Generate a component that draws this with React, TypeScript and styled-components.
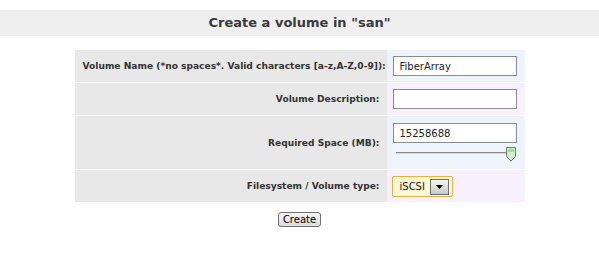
import * as React from 'react'
import styled, { createGlobalStyle } from 'styled-components';

const GlobalStyle = createGlobalStyle`
	body {
		margin: 0;
		background: #ffffff;
		font-family: "DejaVu Sans", Verdana, sans-serif;
		color: #333333;
	}
`

const Page = styled.div`
	padding-top: 10px;
	display: flex;
	flex-direction: column;
	align-items: center;
`

const TitleBar = styled.h2`
	align-self: stretch;
	margin: 0;
	height: 26px;
	line-height: 26px;
	background: #efefef;
	text-align: center;
	font-size: 13px;
	font-weight: bold;
	color: #3a3a3a;
`

const FormTable = styled.table`
	margin-top: 13px;
	border-collapse: separate;
	border-spacing: 0 1px;
	table-layout: fixed;
	width: 450px;
`

const LabelCell = styled.td`
	width: 297px;
	background: #e8e8e8;
	text-align: right;
	padding: 0 7px 0 8px;
	font-size: 9.1px;
	font-weight: bold;
	color: #333333;
	white-space: nowrap;
`

const ValueCell = styled.td<{ $tint: 'blue' | 'pink' }>`
	background: ${p => (p.$tint === 'blue' ? '#edf4fc' : '#f8f0fc')};
	padding: 0 5px 0 6px;
`

const Row = styled.tr<{ $tall?: boolean }>`
	height: ${p => (p.$tall ? '53px' : '32px')};
`

const TextInput = styled.input`
	box-sizing: border-box;
	display: block;
	width: 124px;
	height: 20px;
	border: 1px solid #8c8c8c;
	background: #ffffff;
	padding: 0 6px;
	font-family: "DejaVu Sans", Verdana, sans-serif;
	font-size: 10px;
	color: #222222;
	outline: none;
`

const SliderBox = styled.div`
	margin-top: 3px;
	width: 124px;
	height: 16px;
`

const SelectBox = styled.div`
	display: inline-flex;
	align-items: center;
	gap: 5px;
	box-sizing: border-box;
	height: 21px;
	margin-left: -1px;
	padding: 0 3px 0 7px;
	background: #fff6d2;
	border: 1px solid #e0b24a;
	border-radius: 2px;
	font-size: 10px;
	color: #222222;
`

const ArrowButton = styled.span`
	display: flex;
	align-items: center;
	justify-content: center;
	width: 17px;
	height: 14px;
	background: linear-gradient(#f4f4f4, #c9c9c9);
	border: 1px solid #6f6f6f;
`

const Submit = styled.button`
	margin-top: 9px;
	padding: 0 4px;
	height: 15px;
	font-family: "DejaVu Sans", Verdana, sans-serif;
	font-size: 10px;
	line-height: 12px;
	color: #000000;
	background: linear-gradient(#f6f6f6, #dcdcdc);
	border: 1px solid #707070;
	border-radius: 3px;
`

const rows = [
	{ label: 'Volume Name (*no spaces*. Valid characters [a-z,A-Z,0-9]):', value: 'FiberArray' },
	{ label: 'Volume Description:', value: '' },
]

const Slider = () => (
	<SliderBox>
		<svg width="124" height="16" viewBox="0 0 124 16">
			<line x1="3" y1="6.5" x2="118" y2="6.5" stroke="#8a8a8a" strokeWidth="1" />
			<line x1="3" y1="7.5" x2="118" y2="7.5" stroke="#d8d8d8" strokeWidth="1" />
			<path d="M113.5 1.5 h9 v9 l-4.5 4.5 l-4.5 -4.5 z" fill="#d8ecd2" stroke="#5f8a52" />
			<path d="M115 3 h6 v3 h-6 z" fill="#a8d896" />
		</svg>
	</SliderBox>
)

const App = () => {
	return (
		<Page>
			<GlobalStyle />
			<TitleBar>Create a volume in "san"</TitleBar>
			<FormTable>
				<tbody>
					{rows.map((r, i) => (
						<Row key={r.label}>
							<LabelCell>{r.label}</LabelCell>
							<ValueCell $tint={i % 2 === 0 ? 'blue' : 'pink'}>
								<TextInput defaultValue={r.value} />
							</ValueCell>
						</Row>
					))}
					<Row $tall>
						<LabelCell>Required Space (MB):</LabelCell>
						<ValueCell $tint="blue">
							<TextInput defaultValue="15258688" />
							<Slider />
						</ValueCell>
					</Row>
					<Row>
						<LabelCell>Filesystem / Volume type:</LabelCell>
						<ValueCell $tint="pink">
							<SelectBox>
								iSCSI
								<ArrowButton>
									<svg width="7" height="4" viewBox="0 0 7 4">
										<path d="M0 0 h7 l-3.5 4 z" fill="#000000" />
									</svg>
								</ArrowButton>
							</SelectBox>
						</ValueCell>
					</Row>
				</tbody>
			</FormTable>
			<Submit>Create</Submit>
		</Page>
	)
}

export default App;
